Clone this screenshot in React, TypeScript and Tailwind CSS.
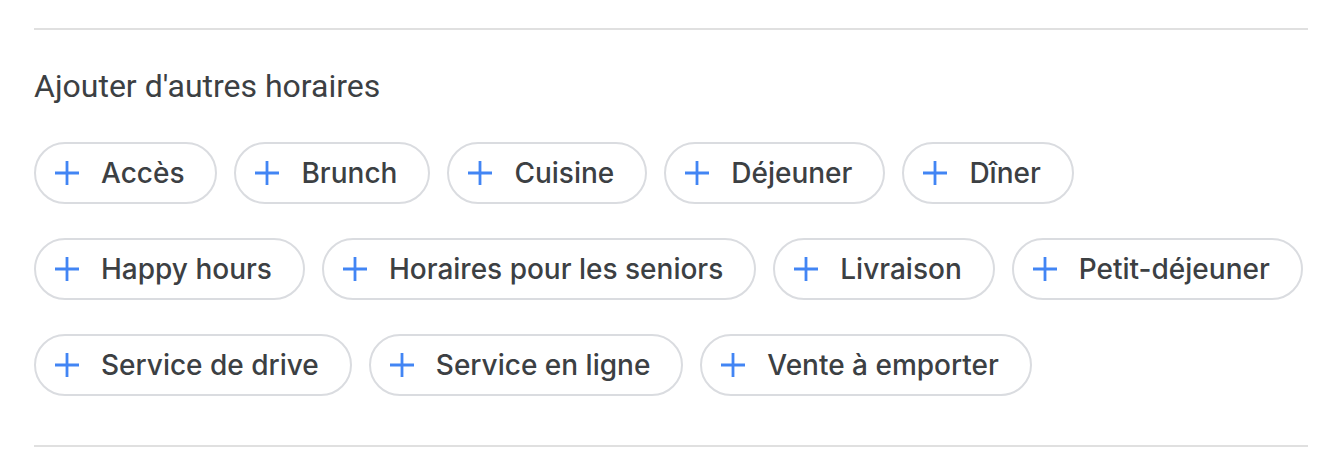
import React from "react";

const rows: string[][] = [
  ["Accès", "Brunch", "Cuisine", "Déjeuner", "Dîner"],
  ["Happy hours", "Horaires pour les seniors", "Livraison", "Petit-déjeuner"],
  ["Service de drive", "Service en ligne", "Vente à emporter"],
];

const PlusIcon = () => (
  <svg width="24" height="24" viewBox="0 0 24 24" className="shrink-0">
    <path d="M12 0v24M0 12h24" stroke="#4285f4" strokeWidth="2.8" fill="none" />
  </svg>
);

const Chip = ({ label }: { label: string }) => (
  <button className="flex items-center h-[62px] pl-[19px] pr-[31px] gap-[22px] rounded-full border-2 border-[#dadce0] bg-white text-[#3c4043] text-[28px] font-medium font-['Inter',sans-serif] cursor-pointer">
    <PlusIcon />
    <span className="leading-none">{label}</span>
  </button>
);

export default function App() {
  return (
    <div className="bg-white w-[1342px] h-[476px] px-[34px] pt-[28px] font-['Roboto',sans-serif]">
      <div className="border-t-2 border-[#e0e0e0]" />
      <h2 className="mt-[36px] text-[32px] leading-[40px] text-[#3c4043] font-normal">
        Ajouter d'autres horaires
      </h2>
      <div className="mt-[36px] flex flex-col gap-[34px]">
        {rows.map((row, i) => (
          <div key={i} className="flex gap-[17px]">
            {row.map((label) => (
              <Chip key={label} label={label} />
            ))}
          </div>
        ))}
      </div>
      <div className="mt-[49px] border-t-2 border-[#e0e0e0]" />
    </div>
  );
}
